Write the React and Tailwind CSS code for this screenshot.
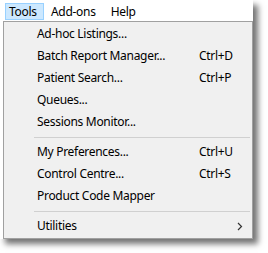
import React from "react";

const Row = ({ label, shortcut, sub }) => (
  <div className="h-[22px] flex items-center relative text-black">
    <span className="absolute left-[33px]">{label}</span>
    {shortcut && <span className="absolute left-[195px]">{shortcut}</span>}
    {sub && (
      <svg className="absolute left-[233px]" width="6" height="9" viewBox="0 0 6 9">
        <path d="M1 1 L4.5 4.5 L1 8" stroke="#333" strokeWidth="1.2" fill="none" />
      </svg>
    )}
  </div>
);

const Sep = () => (
  <div className="h-[8px] flex items-center pl-[30px] pr-[2px]">
    <div className="h-px w-full bg-[#d0d0d0]" />
  </div>
);

export default function App() {
  return (
    <div
      className="w-[268px] h-[253px] bg-white tracking-[-0.3px]"
      style={{ fontFamily: '"Noto Sans", "Open Sans", sans-serif', fontSize: "12px" }}
    >
      <div className="w-[253px] h-[239px] bg-white flex flex-col shadow-[5px_5px_6px_rgba(0,0,0,0.55)]">
        <div className="h-[21px] flex items-start pt-[3px] pl-[5px]">
          <div className="h-[17px] w-[39px] pl-[3px] flex items-center bg-[#cce8ff] border border-[#99d1ff]">Tools</div>
          <div className="h-[17px] px-[7px] flex items-center">Add-ons</div>
          <div className="h-[17px] pl-[8px] flex items-center">Help</div>
        </div>
        <div className="ml-[3px] flex-1 bg-[#f0f0f0] border border-[#a0a0a0] pt-[1px]">
          <Row label="Ad-hoc Listings..." />
          <Row label="Batch Report Manager..." shortcut="Ctrl+D" />
          <Row label="Patient Search..." shortcut="Ctrl+P" />
          <Row label="Queues..." />
          <Row label="Sessions Monitor..." />
          <Sep />
          <Row label="My Preferences..." shortcut="Ctrl+U" />
          <Row label="Control Centre..." shortcut="Ctrl+S" />
          <Row label="Product Code Mapper" />
          <Sep />
          <Row label="Utilities" sub />
        </div>
      </div>
    </div>
  );
}
